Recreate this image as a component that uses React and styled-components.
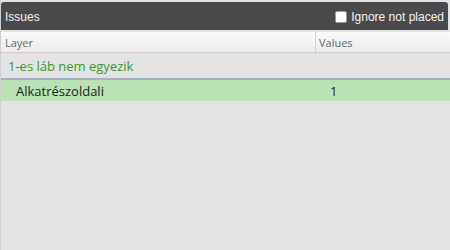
import React from "react";
import styled, { createGlobalStyle } from "styled-components";

const GlobalStyle = createGlobalStyle`
  html, body {
    margin: 0;
    padding: 0;
    background: #e3e3e3;
  }
`;

const Panel = styled.div`
  width: 450px;
  height: 250px;
  display: flex;
  flex-direction: column;
  background: #e3e3e3;
  border-left: 1px solid #cfcfcf;
  box-sizing: border-box;
  overflow: hidden;
`;

const TitleBar = styled.div`
  height: 28px;
  margin: 2px 2px 0 0;
  padding: 1px 4px 0 4px;
  box-sizing: border-box;
  display: flex;
  align-items: center;
  justify-content: space-between;
  background: #4a4a4c;
  border-radius: 3px 3px 0 0;
  color: #f2f2f2;
  font-family: "Liberation Sans", Arial, sans-serif;
  font-size: 12px;
`;

const CheckLabel = styled.label`
  display: flex;
  align-items: center;
  gap: 4px;
`;

const Check = styled.span`
  width: 12px;
  height: 12px;
  background: #fff;
  border: 1px solid #9a9a9a;
  border-radius: 2px;
  box-sizing: border-box;
`;

const Table = styled.div`
  margin-top: 2px;
  display: flex;
  flex-direction: column;
  font-family: "Open Sans", sans-serif;
`;

const HeadRow = styled.div`
  height: 20px;
  display: grid;
  grid-template-columns: 315px 1fr;
  background: linear-gradient(#fbfbfb, #ececec);
  border-bottom: 1px solid #d7c6c6;
`;

const HeadCell = styled.div`
  display: flex;
  align-items: center;
  padding-left: ${(p) => p.$pad}px;
  font-size: 11px;
  color: #666;
  border-right: ${(p) => (p.$divider ? "1px solid #d2d2d2" : "none")};
`;

const GroupRow = styled.div`
  height: 25px;
  display: flex;
  align-items: center;
  padding-left: 7px;
  color: #3a9a2b;
  font-size: 13px;
  border-bottom: 2px solid #a3b2bf;
`;

const DataRow = styled.div`
  height: 21px;
  display: grid;
  grid-template-columns: 329px 1fr;
  align-items: center;
  background: #b9e3b4;
  color: #1e1e1e;
  font-size: 13px;
`;

const DataCell = styled.div`
  padding-left: ${(p) => p.$pad}px;
`;

export default function App() {
  return (
    <>
      <GlobalStyle />
      <Panel>
        <TitleBar>
          <span>Issues</span>
          <CheckLabel>
            <Check />
            Ignore not placed
          </CheckLabel>
        </TitleBar>
        <Table>
          <HeadRow>
            <HeadCell $pad={4} $divider>
              Layer
            </HeadCell>
            <HeadCell $pad={3}>Values</HeadCell>
          </HeadRow>
          <GroupRow>1-es láb nem egyezik</GroupRow>
          <DataRow>
            <DataCell $pad={15}>Alkatrészoldali</DataCell>
            <DataCell $pad={0}>1</DataCell>
          </DataRow>
        </Table>
      </Panel>
    </>
  );
}
